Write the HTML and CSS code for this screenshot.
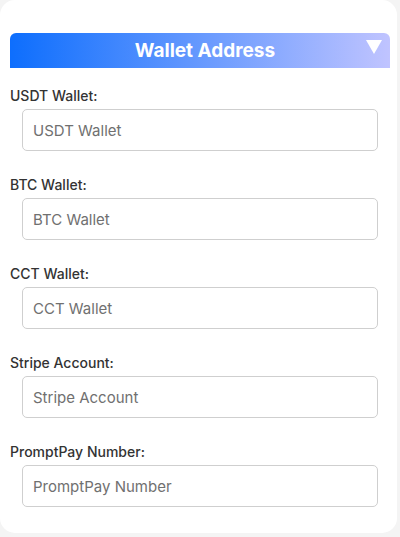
FILE: index.html
```html
<!DOCTYPE html>
<html>
<head>
<meta charset="utf-8">
<link rel="stylesheet" href="styles.css">
</head>
<body>
<div class="card">
  <div class="header">
    <span class="title">Wallet Address</span>
    <svg class="caret" width="16" height="14" viewBox="0 0 16 14"><polygon points="0,0 16,0 8,14" fill="#fff"/></svg>
  </div>
  <div class="group">
    <label class="label">USDT Wallet:</label>
    <input class="field" type="text" placeholder="USDT Wallet">
  </div>
  <div class="group">
    <label class="label">BTC Wallet:</label>
    <input class="field" type="text" placeholder="BTC Wallet">
  </div>
  <div class="group">
    <label class="label">CCT Wallet:</label>
    <input class="field" type="text" placeholder="CCT Wallet">
  </div>
  <div class="group">
    <label class="label">Stripe Account:</label>
    <input class="field" type="text" placeholder="Stripe Account">
  </div>
  <div class="group">
    <label class="label">PromptPay Number:</label>
    <input class="field" type="text" placeholder="PromptPay Number">
  </div>
</div>
</body>
</html>
```
FILE: styles.css
```css
html, body {
  margin: 0;
  padding: 0;
  background: #f4f4f4;
  font-family: Inter, "Liberation Sans", sans-serif;
}
.card {
  width: 397px;
  height: 533px;
  box-sizing: border-box;
  background: #fff;
  border-radius: 15px;
  padding: 33px 7px 0 10px;
}
.header {
  position: relative;
  height: 35px;
  border-radius: 6px 6px 0 0;
  background: linear-gradient(to right, #0d6efd, #c0c4ff);
  display: flex;
  align-items: center;
  justify-content: center;
  padding-left: 10px;
  margin-bottom: 20px;
}
.title {
  color: #fff;
  font-weight: 700;
  font-size: 19px;
}
.caret {
  position: absolute;
  right: 8px;
  top: 7px;
}
.group {
  display: flex;
  flex-direction: column;
  margin-bottom: 26px;
}
.label {
  font-size: 14px;
  font-weight: 500;
  color: #333;
  line-height: 16px;
  margin-bottom: 5px;
}
.field {
  margin-left: 12px;
  width: 356px;
  height: 42px;
  box-sizing: border-box;
  border: 1px solid #cfcfcf;
  border-radius: 5px;
  padding: 0 10px;
  font-family: Inter, "Liberation Sans", sans-serif;
  font-size: 15px;
  color: #333;
  background: #fff;
  outline: none;
}
.field::placeholder {
  color: #707070;
}
```
